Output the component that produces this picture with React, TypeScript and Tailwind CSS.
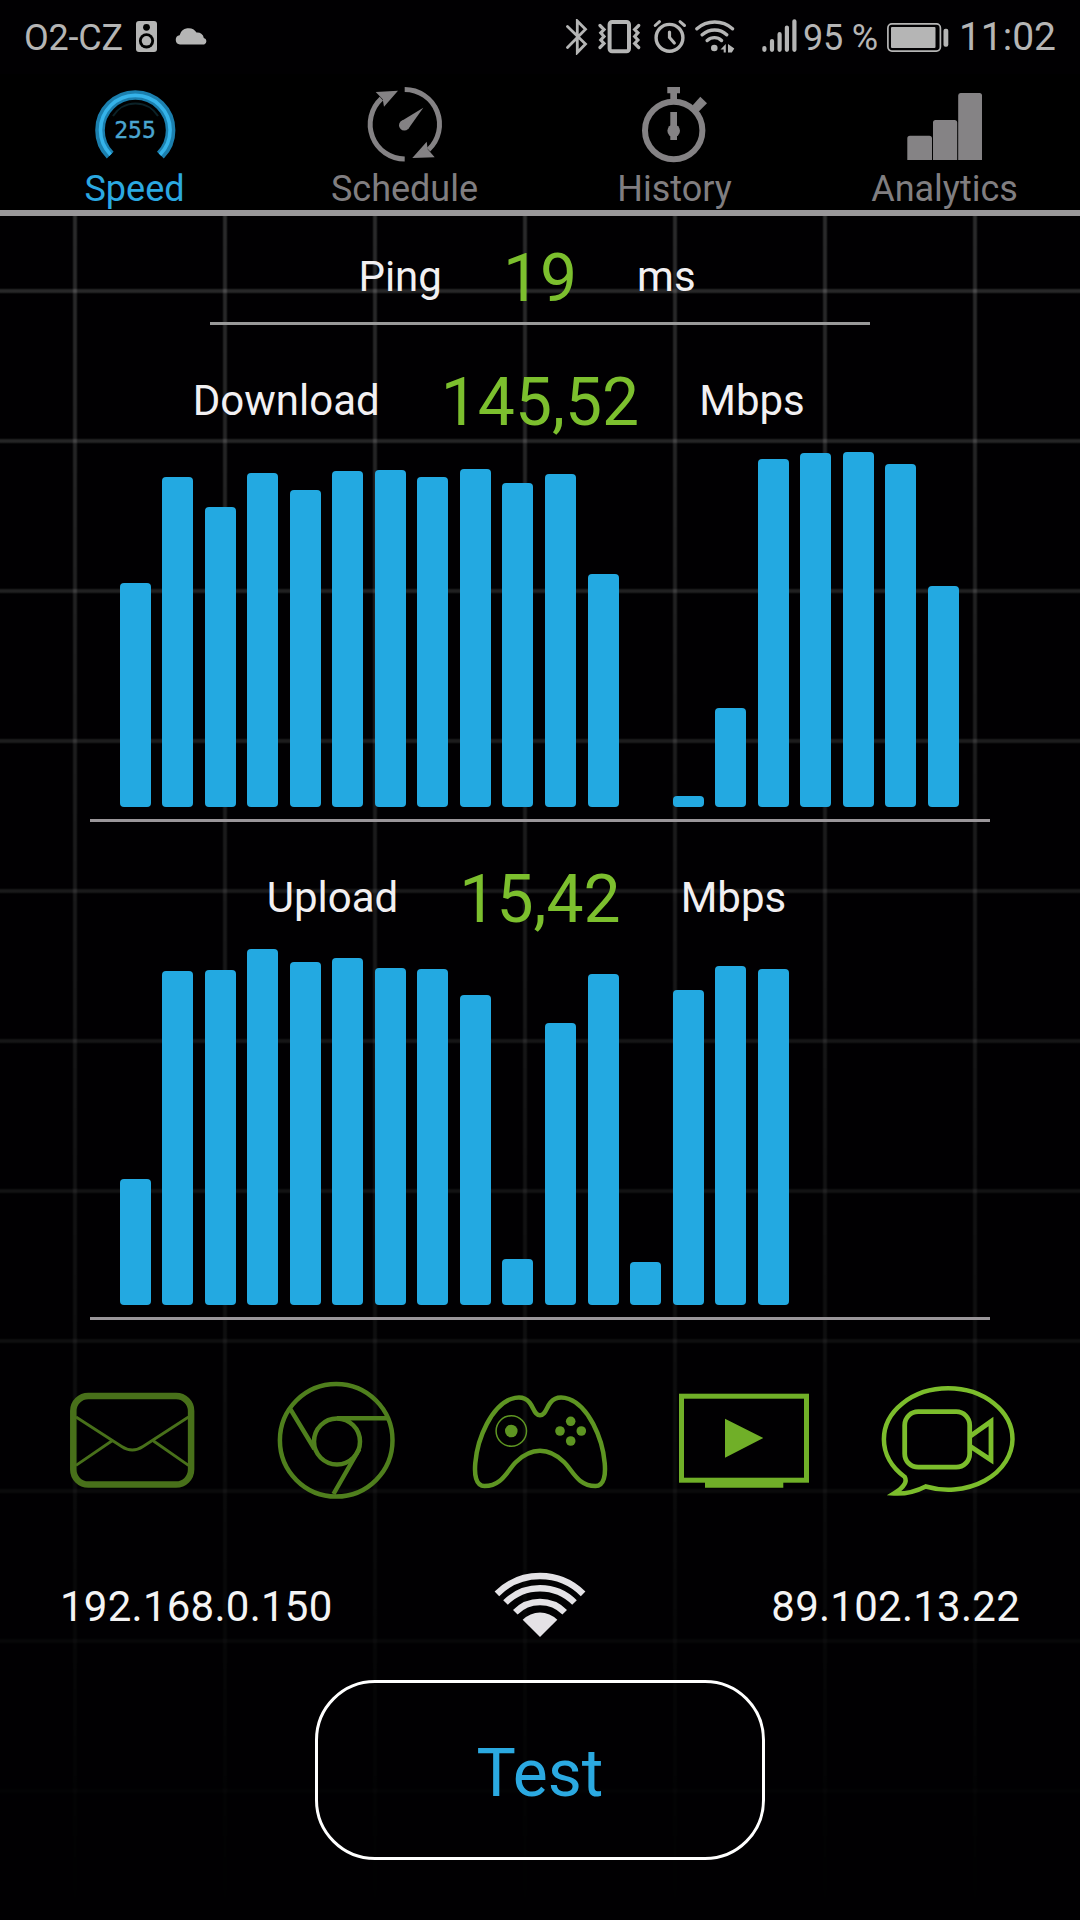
import type { ReactNode } from "react";
import { clsx } from "clsx";

const DOWNLOAD = [224, 330, 300, 334, 317, 336, 337, 330, 338, 324, 333, 233, 0, 11, 99, 348, 354, 355, 343, 221];
const UPLOAD = [126, 334, 335, 356, 343, 347, 337, 336, 310, 46, 282, 331, 43, 315, 339, 336];

function StatusBar() {
  return (
    <div className="flex h-[74px] items-center px-6 text-[36px] leading-none text-[#b5b5b5]">
      <span className="pt-px tracking-[-0.2px]">O2-CZ</span>
      <svg className="ml-[13px] mb-px" width="21" height="31" viewBox="0 0 21 31">
        <rect width="21" height="31" rx="3" fill="#b5b5b5" />
        <circle cx="10.5" cy="6.3" r="3.4" fill="#000" />
        <circle cx="10.5" cy="19.8" r="7.6" fill="#000" />
        <circle cx="10.5" cy="19.8" r="4.8" fill="#b5b5b5" />
      </svg>
      <svg className="ml-[18px] mb-1" width="33" height="19" viewBox="0 0 33 19" fill="#b5b5b5">
        <path d="M5 18.5A4.7 4.7 0 0 1 4.6 9.2A9.3 9.3 0 0 1 21.5 6.6A6.3 6.3 0 0 1 28.8 12A3.4 3.4 0 0 1 29.2 18.5z" />
      </svg>

      <div className="ml-auto flex items-center">
        <svg width="22" height="36" viewBox="0 0 22 36" fill="none" stroke="#b5b5b5" strokeWidth="2.8" strokeLinecap="round">
          <path d="M1.5 7.5L19.5 25L11.3 33.5V2L19.5 10.3L1.5 28.5" />
        </svg>
        <svg className="ml-[10px]" width="43" height="36" viewBox="0 0 43 36" fill="none" stroke="#b5b5b5">
          <rect x="11.6" y="3" width="19.4" height="29.3" rx="2.5" strokeWidth="4" />
          <path d="M2 6.5L6 10.5L2.8 13.8L6 17.5L2.8 21L6 24.5L2 28.5M40.7 6.5L36.7 10.5L39.9 13.8L36.7 17.5L39.9 21L36.7 24.5L40.7 28.5" strokeWidth="3.2" strokeLinecap="round" />
        </svg>
        <svg className="ml-3" width="34" height="36" viewBox="0 0 34 36" fill="none" stroke="#b5b5b5" strokeLinecap="round">
          <circle cx="16.5" cy="18.8" r="13.4" strokeWidth="3.4" />
          <path d="M16.5 13V18.5L21.3 24" strokeWidth="3.2" />
          <path d="M2.2 6.5L6.5 2.7M31.5 6.5L27 2.7" strokeWidth="3" />
        </svg>
        <svg className="ml-2" width="40" height="36" viewBox="0 0 40 36" fill="none" stroke="#b5b5b5" strokeWidth="3.4" strokeLinecap="round">
          <path d="M1.9 9.8C12 .8 27.5 .8 37.5 9.8M7.2 15.8C14.5 9.3 25 9.3 31.7 15.8M12.2 21.5C16.5 17.7 22.5 17.7 26.5 21.5" />
          <circle cx="19.3" cy="29" r="3.3" fill="#b5b5b5" stroke="none" />
          <path d="M25.5 30.5L30.8 25V33.5H28.7V30.5zM33 25L39.3 29.5L36.8 33.5H33z" fill="#b5b5b5" stroke="none" />
        </svg>
        <svg className="ml-[27px]" width="35" height="36" viewBox="0 0 35 36" stroke="#b5b5b5" strokeWidth="4.2" strokeLinecap="round">
          <path d="M2.4 29V30.8M10 22V30.8M17.6 15.2V30.8M24.9 8.5V30.8M32.4 2.3V30.8" />
        </svg>
        <span className="ml-[6px] pt-0.5 tracking-[-0.2px]">95 %</span>
        <svg className="ml-[9px]" width="62" height="36" viewBox="0 0 62 36" fill="#b5b5b5">
          <rect x=".9" y="4.9" width="52.5" height="27.2" rx="4" fill="none" stroke="#b5b5b5" strokeWidth="1.7" />
          <rect x="4" y="8" width="44.5" height="21" rx="1" />
          <rect x="56.5" y="9.7" width="4.8" height="18" rx="2" />
        </svg>
        <span className="ml-[10px] pt-px text-[39px]">11:02</span>
      </div>
    </div>
  );
}

function Tab({ label, active, children }: { label: string; active?: boolean; children: ReactNode }) {
  return (
    <div className="flex flex-col items-center pt-2">
      <svg width="84" height="84" viewBox="0 0 84 84" fill="none">
        {children}
      </svg>
      <span className={clsx("mt-[5px] pr-px text-[36px] leading-9", active ? "text-[#2ba9e1]" : "text-[#807e80]")}>
        {label}
      </span>
    </div>
  );
}

function Tabs() {
  return (
    <div className="grid h-[142px] grid-cols-4 border-b-[6px] border-[#9a989a] bg-black">
      <Tab label="Speed" active>
        <path d="M17.2 73.1A35.3 35.3 0 1 1 67.4 73.1" stroke="#1b7fae" strokeWidth="9.6" />
        <path d="M17.6 72.7A34.8 34.8 0 1 1 67 72.7" stroke="#35b3ea" strokeWidth="3.6" />
        <path d="M20 34A26.5 26.5 0 0 1 65 34" stroke="#0b2228" strokeWidth="2" />
        <text x="42" y="56.3" textAnchor="middle" fill="#4aa5d0" stroke="#4aa5d0" strokeWidth=".4" fontFamily="DejaVu Sans Mono, monospace" fontSize="23">
          255
        </text>
      </Tab>
      <Tab label="Schedule">
        <path d="M41.7 7.5A34.8 34.8 0 0 1 65.5 67.7M41.7 77.1A34.8 34.8 0 0 1 18.4 16.7" stroke="#848284" strokeWidth="5" />
        <path d="M12.7 10L35 8.7L21 24.7L19.7 17.3zM71.7 75.3L49.3 76L63.7 59.7L64.7 67.3z" fill="#848284" />
        <circle cx="41.3" cy="43.3" r="5.3" fill="#848284" />
        <path d="M60.3 25.7L45 47.2L37.7 39.5z" fill="#848284" />
      </Tab>
      <Tab label="History">
        <circle cx="40.7" cy="48.5" r="28.7" stroke="#848284" strokeWidth="6" />
        <path d="M34.3 5H47V11.3H44V19H37.3V11.3H34.3z" fill="#848284" />
        <path d="M59.5 23.5L67.3 14.7L74 21.3L65.5 29.7z" fill="#848284" />
        <rect x="37.3" y="30" width="6.7" height="28" fill="#848284" />
        <circle cx="40.7" cy="48.7" r="6.3" fill="#848284" />
      </Tab>
      <Tab label="Analytics">
        <path d="M4.3 78V56.5Q4.3 53.7 7 53.7H26.3Q29 53.7 29 56.5V78zM30 78V40.5Q30 38 32.5 38H51.5Q54.2 38 54.2 40.5V78zM55.2 78V13.5Q55.2 11 57.5 11H76.5Q79 11 79 13.5V78z" fill="#858385" />
      </Tab>
    </div>
  );
}

function Reading({ label, value, unit }: { label: string; value: string; unit: string }) {
  return (
    <div className="grid h-[86px] grid-cols-[1fr_auto_1fr] items-center gap-[60px] text-[42px] leading-none text-[#f2f0f2]">
      <span className="pr-px pb-1 text-right">{label}</span>
      <span className="text-[66px] text-[#7cbf2e]">{value}</span>
      <span className="pb-1">{unit}</span>
    </div>
  );
}

function Chart({ data }: { data: number[] }) {
  return (
    <div className="mx-[90px] box-content flex h-[361px] items-end gap-[11px] border-b-[3px] border-[#9a969a] px-[30px] pb-3">
      {data.map((h, i) => (
        <div
          key={i}
          // the pitch is 42.5px, so every other gap takes the spare pixel
          className={clsx("w-[31px] shrink-0 rounded-[4px] bg-[#23a9e1]", i % 2 === (i < 10 ? 1 : 0) && i > 0 && "mr-px")}
          style={{ height: h }}
        />
      ))}
    </div>
  );
}

function Glyph({ color, children }: { color: string; children: ReactNode }) {
  return (
    <svg className={clsx("justify-self-center", color)} width="150" height="150" viewBox="0 0 150 150" fill="none" stroke="currentColor" strokeWidth="4.5">
      {children}
    </svg>
  );
}

function Services() {
  return (
    <div className="mt-[45px] grid grid-cols-5 px-[30px]">
      <Glyph color="text-[#48701a]">
        <rect x="16.3" y="31" width="117.8" height="88.6" rx="15" strokeWidth="6.5" />
        <path d="M19 52L64.7 81.5Q75.3 88.5 86 81.5L131.5 52M19 100.3L54.7 76M96.5 76L131.5 100.3" strokeWidth="2.8" />
      </Glyph>
      <Glyph color="text-[#4f7f1d]">
        <circle cx="75.2" cy="75.3" r="56.3" />
        <circle cx="76" cy="76.5" r="23" />
        <path d="M76 53.3H126.5M29.5 44.3L53.5 84M98.3 84L72.5 129" />
      </Glyph>
      <Glyph color="text-[#5e9522]">
        <path d="M75 50.3C69.5 50.3 69 43 64.5 37.5C60 32 53 31.5 46 34C27 41 12.5 72 10.3 98C9.3 109 10.5 121 19.5 121C37 121 42 106 51 97C60 88 67 85.7 75 85.7C83 85.7 90 88 99 97C108 106 113 121 130.5 121C139.5 121 140.7 109 139.7 98C137.5 72 123 41 104 34C97 31.5 90 32 85.5 37.5C81 43 80.5 50.3 75 50.3z" />
        <circle cx="46.3" cy="66" r="15.2" strokeWidth="1.5" />
        <g fill="currentColor" stroke="none">
          <circle cx="46.3" cy="66" r="6.3" />
          <circle cx="105.7" cy="56.3" r="4.8" />
          <circle cx="116.3" cy="66" r="4.8" />
          <circle cx="105.7" cy="76" r="4.8" />
          <circle cx="95" cy="66" r="4.8" />
        </g>
      </Glyph>
      <Glyph color="text-[#70af28]">
        <rect x="12.5" y="31.2" width="125" height="84" strokeWidth="5" />
        <path d="M36 115H114.3V122.7H36zM56 53.7L94.3 73L56 92.7z" fill="currentColor" stroke="none" />
      </Glyph>
      <Glyph color="text-[#7cbd2c]">
        <path d="M52.7 121.5A64.3 51 0 0 0 139.5 74.3A64.3 51 0 0 0 10.9 74.3A64.3 51 0 0 0 31.8 112C34.5 117 31.5 122 21 128.5C34 129.2 44 126 52.7 121.5z" />
        <rect x="31.7" y="46.7" width="65" height="55.5" rx="13.5" strokeWidth="4.8" />
        <path d="M97.5 71L118 56.5V95L97.5 81.5" strokeWidth="4.8" />
      </Glyph>
    </div>
  );
}

export default function App() {
  return (
    <div className="h-[1920px] w-[1080px] overflow-hidden bg-[#010002] font-[Roboto,sans-serif]">
      <div className="relative flex h-full flex-col">
        {/* grid backdrop, fading out towards the bottom */}
        <div className="absolute inset-x-0 top-[216px] bottom-0 bg-[linear-gradient(to_right,transparent,#ffffff29_2px,#ffffff29_4px,transparent_6px),linear-gradient(to_bottom,transparent,#ffffff29_2px,#ffffff29_4px,transparent_6px)] bg-[length:150px_150px] bg-[position:72px_0,0_72px] mask-[linear-gradient(to_bottom,#000,transparent)]" />
        <div className="relative flex flex-col">
          <StatusBar />
          <Tabs />

          <div className="pt-5">
            <Reading label="Ping" value="19" unit="ms" />
          </div>
          <div className="mx-[210px] h-[3px] bg-[#999]" />

          <div className="pt-[35px]">
            <Reading label="Download" value="145,52" unit="Mbps" />
            <Chart data={DOWNLOAD} />
          </div>
          <div className="flex flex-col gap-px pt-[35px]">
            <Reading label="Upload" value="15,42" unit="Mbps" />
            <Chart data={UPLOAD} />
          </div>

          <Services />

          <div className="mt-[57px] flex h-[66px] items-center justify-between px-[60px] text-[42px] leading-none tracking-[0.25px] text-[#f4f4f4]">
            <span className="flex-1 pt-1">192.168.0.150</span>
            <svg width="92" height="66" viewBox="0 0 92 66" fill="none" stroke="#e4e2e6" strokeWidth="6.5">
              <path d="M2.9 21.9A61 61 0 0 1 89.1 21.9M11.5 30.5A48.8 48.8 0 0 1 80.5 30.5M21.3 40.3A35 35 0 0 1 70.7 40.3" />
              <path d="M46 65L28.7 47.7A24.5 24.5 0 0 1 63.3 47.7z" fill="#e4e2e6" stroke="none" />
            </svg>
            <span className="flex-1 pt-1 text-right">89.102.13.22</span>
          </div>

          <button className="mt-[42px] h-[180px] w-[450px] self-center rounded-[60px] border-[3px] border-white pt-2 text-[66px] leading-none text-[#2ba9e1]">
            Test
          </button>
        </div>
      </div>
    </div>
  );
}
